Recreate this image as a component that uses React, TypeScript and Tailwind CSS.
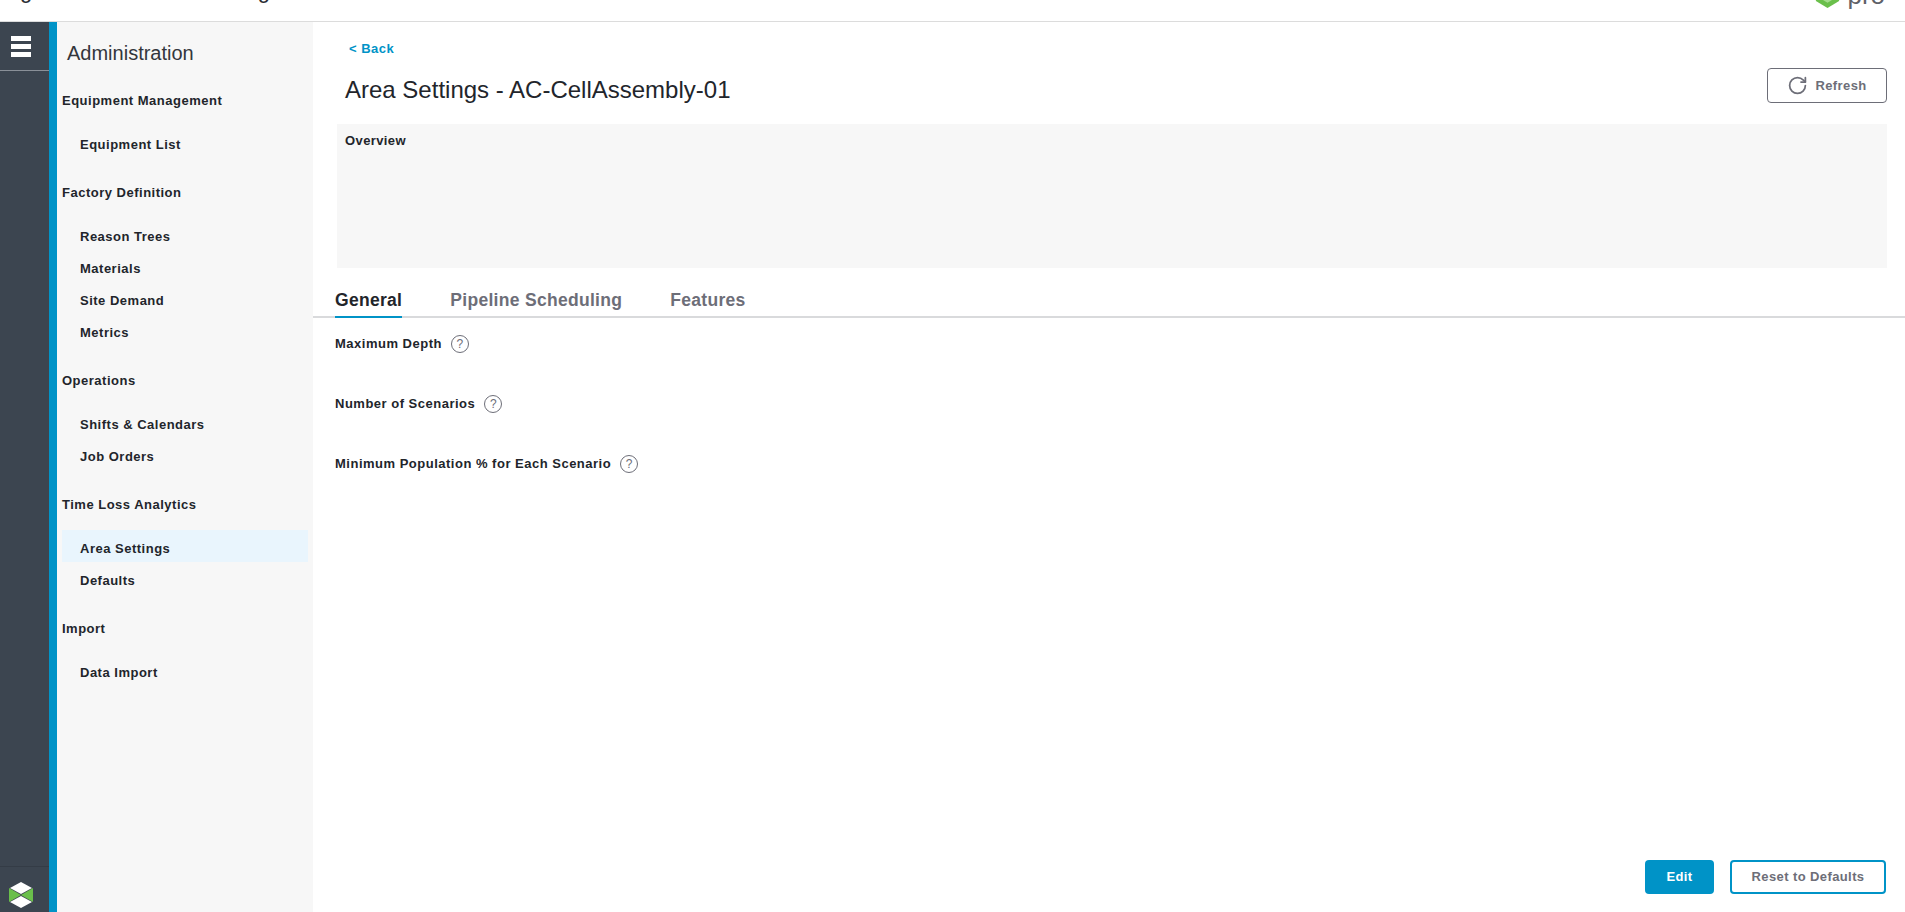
import { RotateCw } from "lucide-react";

const navGroups = [
  { title: "Equipment Management", items: ["Equipment List"] },
  { title: "Factory Definition", items: ["Reason Trees", "Materials", "Site Demand", "Metrics"] },
  { title: "Operations", items: ["Shifts & Calendars", "Job Orders"] },
  { title: "Time Loss Analytics", items: ["Area Settings", "Defaults"] },
  { title: "Import", items: ["Data Import"] },
];

const fields = ["Maximum Depth", "Number of Scenarios", "Minimum Population % for Each Scenario"];

function HelpIcon() {
  return (
    <span className="ml-[9px] flex h-[18px] w-[18px] items-center justify-center rounded-full border border-[#6d6e78] text-[12px] font-normal leading-none tracking-normal text-[#6d6e78]">
      ?
    </span>
  );
}

function RailLogo() {
  return (
    <svg width="24" height="28" viewBox="0 0 24 28">
      <path d="M0 7 L12 14 L0 21 Z" fill="#6abf4b" />
      <path d="M24 7 L12 14 L24 21 Z" fill="#6abf4b" />
      <path d="M12 1 L23 7 L12 13 L1 7 Z" fill="#fff" />
      <path d="M12 15 L23 21 L12 27 L1 21 Z" fill="#fff" />
    </svg>
  );
}

function Sidebar() {
  return (
    <aside className="w-[256px] shrink-0 bg-[#f7f7f7] text-[13px] font-bold tracking-[0.5px] text-[#22252b]">
      <div className="h-[62px] pl-[10px] pt-[19px] text-[20px] font-normal leading-[24px] tracking-normal text-[#33363c]">
        Administration
      </div>
      {navGroups.map((group) => (
        <div key={group.title} className="mb-[18px]">
          <div className="mb-[10px] flex h-[32px] items-center pl-[5px] pt-[2px]">{group.title}</div>
          {group.items.map((item) => (
            <div
              key={item}
              className={
                item === "Area Settings"
                  ? "mx-[5px] flex h-[32px] items-center bg-[#e9f5fd] pl-[18px] pt-[6px]"
                  : "mx-[5px] flex h-[32px] items-center pl-[18px] pt-[6px]"
              }
            >
              {item}
            </div>
          ))}
        </div>
      ))}
    </aside>
  );
}

export default function App() {
  return (
    <div className="flex h-screen flex-col overflow-hidden bg-white font-['Liberation_Sans',Arial,sans-serif]">
      <header className="relative flex h-[22px] shrink-0 justify-between overflow-hidden border-b border-[#dcdcdc] pl-[20px] pr-[20px]">
        <div className="-mt-[22px] flex w-[250px] justify-between text-[22px] leading-[26px] text-[#2b2e34]">
          <span>g</span>
          <span>g</span>
        </div>
        <div className="flex items-start">
          <svg width="25" height="36" viewBox="0 0 28 36" className="-mt-[26px] mr-[7px]">
            <path d="M14 4 L27 11 L27 28 L14 36 L1 28 L1 11 Z" fill="#6abf4b" />
            <path d="M14 18 L24 24 L14 30 L4 24 Z" fill="#a5dc8e" />
          </svg>
          <span className="-mt-[20px] text-[26px] leading-[30px] text-[#5f6168]">pro</span>
        </div>
      </header>

      <div className="flex min-h-0 flex-1">
        {/* Icon rail */}
        <nav className="flex w-[49px] shrink-0 flex-col bg-[#3c4550]">
          <div className="flex h-[49px] flex-col gap-[3px] border-b border-[#8a9098] pl-[11px] pt-[14px]">
            <div className="h-[5px] w-[20px] bg-white" />
            <div className="h-[5px] w-[20px] bg-white" />
            <div className="h-[5px] w-[20px] bg-white" />
          </div>
          <div className="mt-auto h-[46px] border-t border-[#343c46] pl-[9px] pt-[14px]">
            <RailLogo />
          </div>
        </nav>
        <div className="w-[8px] shrink-0 bg-[#0093c7]" />

        <Sidebar />

        <main className="flex min-w-0 flex-1 flex-col">
          <div className="flex h-[102px] shrink-0 pl-[32px] pr-[18px]">
            <div className="flex-1">
              <a className="block pl-[4px] pt-[19px] text-[13px] font-bold leading-[16px] tracking-[0.5px] text-[#0093c7]">
                &lt; Back
              </a>
              <h1 className="pt-[19px] text-[24px] font-normal leading-[28px] text-[#22252b]">
                Area Settings - AC-CellAssembly-01
              </h1>
            </div>
            <button className="mt-[46px] flex h-[35px] w-[120px] items-center justify-center gap-[7px] rounded-[4px] border border-[#6d6e78] bg-white text-[13px] font-bold tracking-[0.4px] text-[#6d6e78]">
              <RotateCw size={21} strokeWidth={2} />
              Refresh
            </button>
          </div>

          <section className="ml-[24px] mr-[18px] h-[144px] shrink-0 bg-[#f7f7f7] px-[8px] pt-[9px] text-[13px] font-bold leading-[16px] tracking-[0.4px] text-[#22252b]">
            Overview
          </section>

          <div className="mt-[16px] flex h-[34px] shrink-0 gap-[48px] border-b-2 border-[#d9dadc] pl-[22px] text-[17.5px] font-bold leading-[32px] tracking-[0.3px] text-[#6d6e78]">
            <span className="h-[34px] border-b-2 border-[#0093c7] text-[#22252b]">General</span>
            <span>Pipeline Scheduling</span>
            <span>Features</span>
          </div>

          <div className="flex flex-col pl-[22px] pt-[17px] text-[13px] font-bold tracking-[0.5px] text-[#22252b]">
            {fields.map((label) => (
              <div key={label} className="mb-[42px] flex h-[18px] items-center">
                {label}
                <HelpIcon />
              </div>
            ))}
          </div>

          <div className="mt-auto flex shrink-0 justify-end gap-[16px] pb-[18px] pr-[19px] text-[13px] font-bold tracking-[0.4px]">
            <button className="h-[34px] w-[69px] rounded-[4px] bg-[#0093c7] text-white">Edit</button>
            <button className="h-[34px] w-[156px] rounded-[4px] border-2 border-[#0093c7] bg-white text-[#6d6e78]">
              Reset to Defaults
            </button>
          </div>
        </main>
      </div>
    </div>
  );
}
